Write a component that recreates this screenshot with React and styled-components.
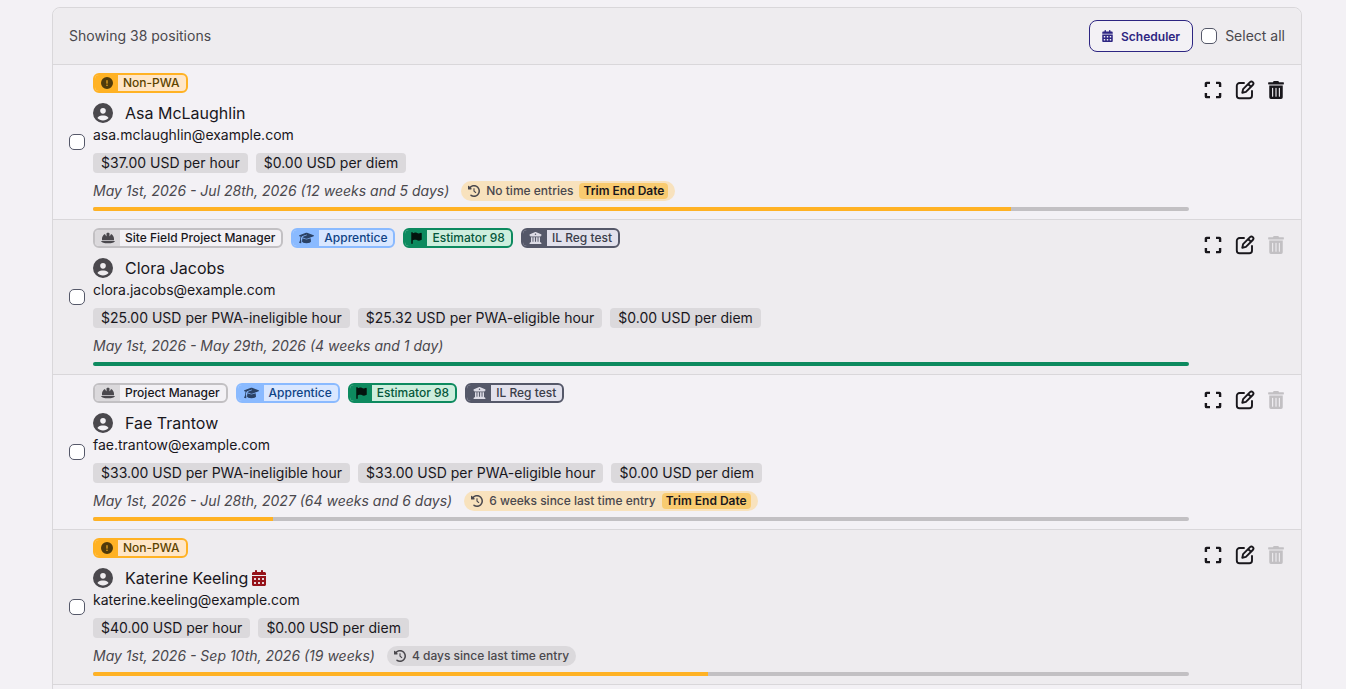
import styled, { createGlobalStyle } from "styled-components";
import {
  FaCalendarDays,
  FaCircleExclamation,
  FaCircleUser,
  FaClockRotateLeft,
  FaFlag,
  FaGraduationCap,
  FaHelmetSafety,
  FaBuildingColumns,
} from "react-icons/fa6";
import { FaTrashAlt } from "react-icons/fa";

const GlobalStyle = createGlobalStyle`
  * {
    box-sizing: border-box;
  }
  body {
    margin: 0;
    background: #f3f1f5;
    color: #19171c;
    font-family: Inter, "Liberation Sans", sans-serif;
    font-size: 14px;
    line-height: 20px;
  }
  button {
    font-family: inherit;
    cursor: pointer;
  }
`;

const tagTypes = {
  nonPwa: { icon: FaCircleExclamation, iconWidth: 12, main: "#ffb224", side: "#ffb224", bg: "#ffe6c7", color: "#5c4300", iconColor: "#4f3a0b" },
  role: { icon: FaHelmetSafety, iconWidth: 14, main: "#c2c0c3", side: "#dbd9dc", bg: "#f3f1f5", color: "#19171c", iconColor: "#4a484d" },
  apprentice: { icon: FaGraduationCap, iconWidth: 15, main: "#8abaff", side: "#8abaff", bg: "#d9e7ff", color: "#0f4385", iconColor: "#2b4265" },
  estimator: { icon: FaFlag, iconWidth: 11, main: "#0d8a5f", side: "#0d8a5f", bg: "#cdeedd", color: "#06573b", iconColor: "#03140e" },
  region: { icon: FaBuildingColumns, iconWidth: 13, main: "#555869", side: "#555869", bg: "#e2e1ec", color: "#3b3d4a", iconColor: "#dddce6" },
};

const positions = [
  {
    name: "Asa McLaughlin",
    email: "asa.mclaughlin@example.com",
    tags: [["nonPwa", "Non-PWA"]],
    rates: ["$37.00 USD per hour", "$0.00 USD per diem"],
    dates: "May 1st, 2026 - Jul 28th, 2026 (12 weeks and 5 days)",
    activity: "No time entries",
    canTrim: true,
    canDelete: true,
    progress: 83.8,
  },
  {
    name: "Clora Jacobs",
    email: "clora.jacobs@example.com",
    tags: [
      ["role", "Site Field Project Manager"],
      ["apprentice", "Apprentice"],
      ["estimator", "Estimator 98"],
      ["region", "IL Reg test"],
    ],
    rates: ["$25.00 USD per PWA-ineligible hour", "$25.32 USD per PWA-eligible hour", "$0.00 USD per diem"],
    dates: "May 1st, 2026 - May 29th, 2026 (4 weeks and 1 day)",
    progress: 100,
  },
  {
    name: "Fae Trantow",
    email: "fae.trantow@example.com",
    tags: [
      ["role", "Project Manager"],
      ["apprentice", "Apprentice"],
      ["estimator", "Estimator 98"],
      ["region", "IL Reg test"],
    ],
    rates: ["$33.00 USD per PWA-ineligible hour", "$33.00 USD per PWA-eligible hour", "$0.00 USD per diem"],
    dates: "May 1st, 2026 - Jul 28th, 2027 (64 weeks and 6 days)",
    activity: "6 weeks since last time entry",
    canTrim: true,
    progress: 16.4,
  },
  {
    name: "Katerine Keeling",
    email: "katerine.keeling@example.com",
    tags: [["nonPwa", "Non-PWA"]],
    rates: ["$40.00 USD per hour", "$0.00 USD per diem"],
    dates: "May 1st, 2026 - Sep 10th, 2026 (19 weeks)",
    activity: "4 days since last time entry",
    conflict: true,
    progress: 56.1,
  },
];

const ExpandIcon = () => (
  <svg width="18" height="18" viewBox="0 0 18 18" fill="none" stroke="currentColor" strokeWidth="2.4" aria-hidden="true">
    <path d="M1.9 6V2.6Q1.9 1.9 2.6 1.9H6M12 1.9h3.4q.7 0 .7.7V6M16.1 12v3.4q0 .7-.7.7H12M6 16.1H2.6q-.7 0-.7-.7V12" />
  </svg>
);

const EditIcon = () => (
  <svg width="20" height="20" viewBox="0 0 20 20" fill="none" stroke="currentColor" strokeWidth="1.9" strokeLinecap="round" strokeLinejoin="round" aria-hidden="true">
    <path d="M9 3H4.6A2.8 2.8 0 0 0 1.8 5.8v9.6a2.8 2.8 0 0 0 2.8 2.8h9.6a2.8 2.8 0 0 0 2.8-2.8V11" />
    <path d="M7.3 12.7l.8-3.6 6.9-6.9a1.9 1.9 0 0 1 2.8 2.8l-6.9 6.9zM13.2 4l2.8 2.8" />
  </svg>
);

const Tag = ({ type, children }) => {
  const { icon: Icon, iconWidth, ...colors } = tagTypes[type];
  return (
    <TagBox $colors={colors}>
      <TagIcon $colors={colors} $width={iconWidth}>
        <Icon />
      </TagIcon>
      <TagLabel>{children}</TagLabel>
    </TagBox>
  );
};

const Position = ({ position }) => (
  <Row>
    <Checkbox aria-label={`Select ${position.name}`} />
    <Content>
      <Group>
        {position.tags.map(([type, label]) => (
          <Tag key={label} type={type}>
            {label}
          </Tag>
        ))}
      </Group>
      <div>
        <Name>
          <FaCircleUser size={20} />
          <h2>{position.name}</h2>
          {position.conflict && <FaCalendarDays className="conflict" />}
        </Name>
        <div>{position.email}</div>
      </div>
      <Group>
        {position.rates.map((rate) => (
          <Rate key={rate}>{rate}</Rate>
        ))}
      </Group>
      <Schedule>
        <Dates>
          <em>{position.dates}</em>
          {position.activity && (
            <Activity $warning={position.canTrim}>
              <FaClockRotateLeft size={12} />
              {position.activity}
              {position.canTrim && <TrimButton type="button">Trim End Date</TrimButton>}
            </Activity>
          )}
        </Dates>
        <Track>
          <Bar $done={position.progress === 100} style={{ width: `${position.progress}%` }} />
        </Track>
      </Schedule>
    </Content>
    <Actions>
      <IconButton type="button" aria-label="Expand">
        <ExpandIcon />
      </IconButton>
      <IconButton type="button" aria-label="Edit">
        <EditIcon />
      </IconButton>
      <IconButton type="button" aria-label="Delete" disabled={!position.canDelete}>
        <FaTrashAlt size={18} />
      </IconButton>
    </Actions>
  </Row>
);

const App = () => (
  <Page>
    <GlobalStyle />
    <Card>
      <Header>
        <span>Showing 38 positions</span>
        <HeaderActions>
          <SchedulerButton type="button">
            <FaCalendarDays />
            Scheduler
          </SchedulerButton>
          <SelectAll>
            <Checkbox />
            Select all
          </SelectAll>
        </HeaderActions>
      </Header>
      {positions.map((position) => (
        <Position key={position.email} position={position} />
      ))}
    </Card>
  </Page>
);

const Page = styled.main`
  height: 100vh;
  overflow: hidden;
  padding: 7px 44px 0 52px;
`;

const Card = styled.section`
  min-height: 100vh;
  border: 1px solid #d9d7da;
  border-radius: 8px;
`;

const Header = styled.header`
  display: flex;
  align-items: center;
  justify-content: space-between;
  padding: 12px 16px;
  background: #eeecef;
  border-bottom: 1px solid #d9d7da;
  border-radius: 8px 8px 0 0;
  color: #4a484d;
`;

const HeaderActions = styled.div`
  display: flex;
  align-items: center;
  gap: 8px;
`;

const SchedulerButton = styled.button`
  display: flex;
  align-items: center;
  gap: 8px;
  height: 32px;
  padding: 0 12px;
  border: 1px solid #2d2582;
  border-radius: 8px;
  background: #f3f1f5;
  color: #2d2582;
  font-size: 12px;
  font-weight: 600;
  svg {
    width: 11px;
    height: 12px;
  }
`;

const SelectAll = styled.label`
  display: flex;
  align-items: center;
  gap: 8px;
`;

const Checkbox = styled.input.attrs({ type: "checkbox" })`
  appearance: none;
  flex: none;
  width: 16px;
  height: 16px;
  margin: 0;
  border: 1px solid #555869;
  border-radius: 5px;
  background: #fff;
  &:checked {
    background: #2d2582;
  }
`;

const Row = styled.article`
  display: flex;
  align-items: center;
  gap: 8px;
  padding: 8px 16px;
  border-bottom: 1px solid #d9d7da;
  &:nth-child(odd) {
    background: #eeecef;
  }
`;

const Content = styled.div`
  display: flex;
  flex: 1;
  flex-direction: column;
  gap: 8px;
  min-width: 0;
`;

const Group = styled.div`
  display: flex;
  flex-wrap: wrap;
  gap: 8px;
`;

const TagBox = styled.span`
  display: flex;
  height: 20px;
  overflow: hidden;
  border: 2px solid ${({ $colors }) => $colors.main};
  border-radius: 6px;
  background: ${({ $colors }) => $colors.bg};
  color: ${({ $colors }) => $colors.color};
`;

const TagIcon = styled.span`
  display: flex;
  align-items: center;
  padding: 0 5px 0 6px;
  background: ${({ $colors }) => $colors.side};
  color: ${({ $colors }) => $colors.iconColor};
  svg {
    width: ${({ $width }) => $width}px;
    height: 12px;
  }
`;

const TagLabel = styled.span`
  padding: 0 6px 0 5px;
  font-size: 12px;
  font-weight: 500;
  line-height: 16px;
`;

const Name = styled.div`
  display: flex;
  align-items: center;
  color: #4a484d;
  h2 {
    margin: 0 4px 0 12px;
    color: #19171c;
    font-size: 16px;
    font-weight: 400;
    line-height: 24px;
  }
  .conflict {
    width: 14px;
    height: 16px;
    color: #951219;
  }
`;

const Rate = styled.span`
  padding: 0 8px;
  border-radius: 4px;
  background: #dbd9dc;
`;

const Schedule = styled.div`
  display: flex;
  flex-direction: column;
  gap: 6px;
`;

const Dates = styled.div`
  display: flex;
  align-items: center;
  gap: 12px;
  color: #4a484d;
`;

const Activity = styled.span`
  display: flex;
  align-items: center;
  gap: 6px;
  height: 20px;
  padding: 0 7px;
  border-radius: 10px;
  background: ${({ $warning }) => ($warning ? "#f8e2bd" : "#dbd9dc")};
  font-size: 12px;
  font-weight: 500;
`;

const TrimButton = styled.button`
  height: 16px;
  padding: 0 4px;
  border: 0;
  border-radius: 4px;
  background: #f9cb70;
  color: #19171c;
  font-size: 12px;
  font-weight: 600;
  line-height: 16px;
`;

const Track = styled.div`
  height: 4px;
  overflow: hidden;
  border-radius: 2px;
  background: #c2c0c3;
`;

const Bar = styled.div`
  height: 4px;
  background: ${({ $done }) => ($done ? "#0d8a5f" : "#ffb224")};
`;

const Actions = styled.div`
  display: flex;
  align-self: flex-start;
  padding-top: 9px;
`;

const IconButton = styled.button`
  display: flex;
  align-items: center;
  justify-content: center;
  width: 32px;
  height: 16px;
  padding: 0;
  border: 0;
  background: none;
  color: #19171c;
  &:last-child {
    width: 18px;
    margin-left: 6px;
  }
  &:disabled {
    color: #c2c0c3;
    cursor: default;
  }
`;

export default App;
